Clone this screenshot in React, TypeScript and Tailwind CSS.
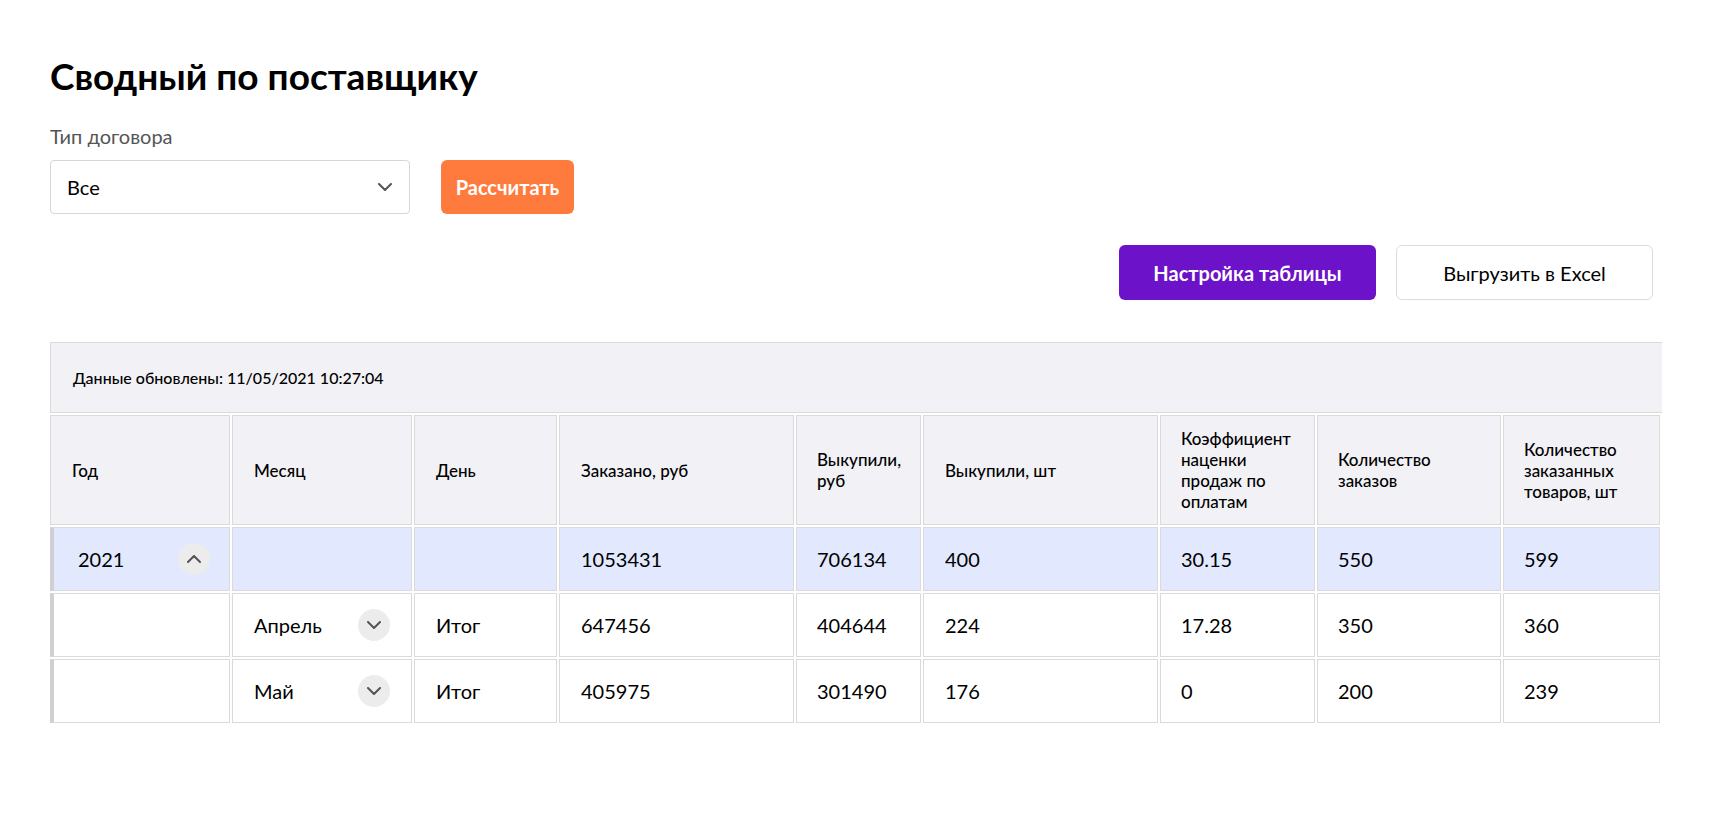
import React from "react";

const cols = [
  { title: ["Год"], w: "w-[180px]" },
  { title: ["Месяц"], w: "w-[180px]" },
  { title: ["День"], w: "w-[143px]" },
  { title: ["Заказано, руб"], w: "w-[235px]" },
  { title: ["Выкупили,", "руб"], w: "w-[125px]", narrow: true },
  { title: ["Выкупили, шт"], w: "w-[235px]" },
  { title: ["Коэффициент", "наценки", "продаж по", "оплатам"], w: "w-[155px]", narrow: true },
  { title: ["Количество", "заказов"], w: "w-[184px]", narrow: true },
  { title: ["Количество", "заказанных", "товаров, шт"], w: "w-[157px]", narrow: true },
];

const rows = [
  { year: "2021", month: "", day: "", v: ["1053431", "706134", "400", "30.15", "550", "599"], top: true },
  { year: "", month: "Апрель", day: "Итог", v: ["647456", "404644", "224", "17.28", "350", "360"] },
  { year: "", month: "Май", day: "Итог", v: ["405975", "301490", "176", "0", "200", "239"] },
];

function Chevron({ up }: { up?: boolean }) {
  return (
    <svg width="14" height="8" viewBox="0 0 14 8" fill="none" className={up ? "rotate-180" : ""}>
      <path d="M1 1l6 6 6-6" stroke="#555" strokeWidth="2" strokeLinecap="round" strokeLinejoin="round" />
    </svg>
  );
}

function RoundToggle({ up }: { up?: boolean }) {
  return (
    <span className="flex h-[32px] w-[32px] items-center justify-center rounded-full bg-[#ececec]">
      <Chevron up={up} />
    </span>
  );
}

export default function App() {
  return (
    <div className="min-h-screen bg-white font-['Lato','Noto_Sans',sans-serif] text-black">
      <div className="px-[50px] pt-[50px]">
        <h1 className="text-[37px] font-bold leading-[52px]">Сводный по поставщику</h1>

        <div className="mt-[22px] text-[20px] leading-[24px] text-[#555]">Тип договора</div>
        <div className="mt-[12px] flex items-center gap-[31px]">
          <div className="flex h-[54px] w-[360px] items-center justify-between rounded-[4px] border border-[#d6d6d6] pl-[16px] pr-[17px]">
            <span className="text-[20px]">Все</span>
            <Chevron />
          </div>
          <button className="h-[54px] w-[133px] rounded-[6px] bg-[#ff7a3d] text-[20px] font-bold text-white">
            Рассчитать
          </button>
        </div>

        <div className="mt-[31px] flex justify-end gap-[20px] pr-[9px]">
          <button className="h-[55px] w-[257px] rounded-[6px] bg-[#6c12c8] text-[20px] font-bold text-white">
            Настройка таблицы
          </button>
          <button className="h-[55px] w-[257px] rounded-[6px] border border-[#dcdcdc] bg-white text-[20px] text-black">
            Выгрузить в Excel
          </button>
        </div>

        <div className="mt-[42px] w-[1612px] overflow-hidden">
          <div className="flex h-[71px] items-center border border-r-0 border-[#dadada] bg-[#f2f2f6] pl-[22px] text-[16px] font-medium">
            Данные обновлены: 11/05/2021 10:27:04
          </div>
          <div className="mt-[2px] flex gap-[2px]">
            {cols.map((c) => (
              <div
                key={c.title.join(" ")}
                className={`${c.w} flex h-[110px] shrink-0 flex-col justify-center border border-[#dadada] bg-[#f2f2f6] text-[17px] font-medium leading-[21px] ${c.narrow ? "pl-[20px] pr-[10px]" : "px-[21px]"}`}
              >
                {c.title.map((t) => (
                  <span key={t} className="whitespace-nowrap">{t}</span>
                ))}
              </div>
            ))}
          </div>
          {rows.map((r, i) => {
            const bg = r.top ? "bg-[#e2e8fd]" : "bg-white";
            return (
              <div key={i} className="mt-[2px] flex gap-[2px] text-[20px]">
                <div className={`${cols[0].w} ${bg} flex h-[64px] shrink-0 items-center justify-between border border-l-[4px] border-[#dadada] border-l-[#d0d0d0] pl-[24px] pr-[19px]`}>
                  <span>{r.year}</span>
                  {r.top && <RoundToggle up />}
                </div>
                <div className={`${cols[1].w} ${bg} flex h-[64px] shrink-0 items-center justify-between border border-[#dadada] pl-[21px] pr-[21px]`}>
                  <span>{r.month}</span>
                  {!r.top && <RoundToggle />}
                </div>
                <div className={`${cols[2].w} ${bg} flex h-[64px] shrink-0 items-center border border-[#dadada] px-[21px]`}>
                  {r.day}
                </div>
                {r.v.map((v, j) => (
                  <div
                    key={j}
                    className={`${cols[j + 3].w} ${bg} flex h-[64px] shrink-0 items-center border border-[#dadada] ${cols[j + 3].narrow ? "pl-[20px]" : "px-[21px]"}`}
                  >
                    {v}
                  </div>
                ))}
              </div>
            );
          })}
        </div>
      </div>
    </div>
  );
}
